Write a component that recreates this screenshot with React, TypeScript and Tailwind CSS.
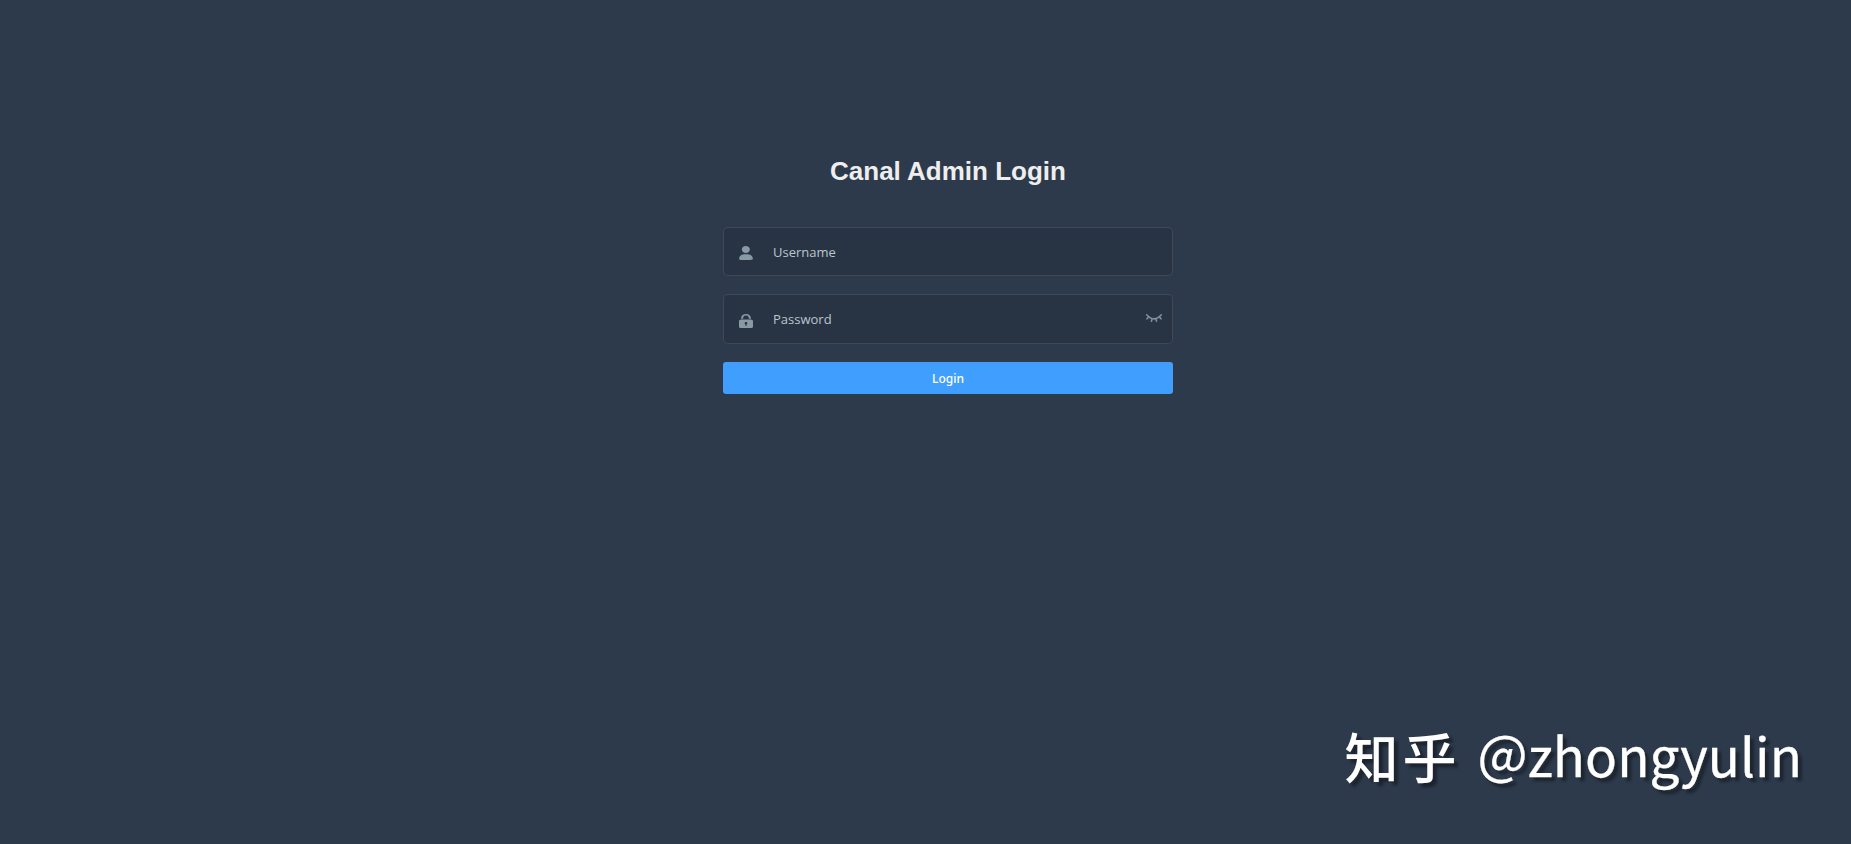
import React from 'react';

function UserIcon() {
  return (
    <svg viewBox="0 0 130 130" className="h-3.5 w-3.5 fill-current" aria-hidden="true">
      <path d="M63.444 64.996c20.633 0 37.359-14.308 37.359-31.953 0-17.649-16.726-31.952-37.359-31.952-20.631 0-37.36 14.303-37.36 31.952 0 17.645 16.729 31.953 37.36 31.953zM80.57 75.65H49.434c-26.652 0-48.26 18.477-48.26 41.27v2.664c0 9.316 21.608 9.325 48.26 9.325H80.57c26.649 0 48.256-.344 48.256-9.325v-2.663c0-22.794-21.605-41.271-48.256-41.271z" />
    </svg>
  );
}

function LockIcon() {
  return (
    <svg viewBox="0 0 128 128" className="h-3.5 w-3.5 fill-current" aria-hidden="true">
      <path d="M108.8 44.322H89.6v-5.36c0-9.04-3.308-24.163-25.6-24.163-23.145 0-25.6 16.881-25.6 24.162v5.361H19.2v-5.36C19.2 15.281 36.798 0 64 0c27.202 0 44.8 15.281 44.8 38.961v5.361zm-32 39.356c0-5.44-5.763-9.832-12.8-9.832-7.037 0-12.8 4.392-12.8 9.832 0 3.682 2.567 6.808 6.407 8.477v11.205c0 2.718 2.875 4.962 6.4 4.962 3.524 0 6.4-2.244 6.4-4.962V92.155c3.833-1.669 6.393-4.795 6.393-8.477zM128 64v49.201c0 8.158-8.645 14.799-19.2 14.799H19.2C8.651 128 0 121.359 0 113.201V64c0-8.153 8.645-14.799 19.2-14.799h89.6c10.555 0 19.2 6.646 19.2 14.799z" />
    </svg>
  );
}

function ClosedEyeIcon() {
  return (
    <svg viewBox="0 0 128 64" className="h-2 w-4 fill-current stroke-current stroke-[3]" aria-hidden="true">
      <path d="M127.072 7.994c1.37-2.208.914-5.152-.914-6.87-2.056-1.717-4.797-1.226-6.396.982-.229.245-25.586 32.382-55.74 32.382-29.24 0-55.74-32.382-55.968-32.627-1.6-1.963-4.57-2.208-6.397-.49C-.17 3.086-.399 6.275 1.2 8.238c.457.736 5.94 7.36 14.62 14.72L4.17 35.96c-1.828 1.963-1.6 5.152.228 6.87.457.98 1.6 1.471 2.742 1.471s2.284-.49 3.198-1.472l12.564-13.983c5.94 4.416 13.021 8.587 20.788 11.53l-4.797 17.418c-.685 2.699.686 5.397 3.198 6.133h1.37c2.057 0 3.884-1.472 4.341-3.68L52.6 42.83c3.655.736 7.538 1.227 11.422 1.227 3.883 0 7.767-.49 11.422-1.227l4.797 17.173c.457 2.208 2.513 3.68 4.34 3.68.457 0 .914 0 1.143-.246 2.513-.736 3.883-3.434 3.198-6.133l-4.797-17.172c7.767-2.944 14.848-7.114 20.788-11.53l12.336 13.738c.913.981 2.056 1.472 3.198 1.472s2.284-.49 3.198-1.472c1.828-1.963 1.828-4.906.228-6.87l-11.65-13.001c9.366-7.36 14.849-14.474 14.849-14.474z" />
    </svg>
  );
}

const inputClass =
  "mt-0.5 ml-5 min-w-0 flex-1 bg-transparent font-['Open_Sans','Noto_Sans',sans-serif] text-[13px] text-white outline-none placeholder:text-[#bcc5ce] placeholder:opacity-100";

export default function App() {
  return (
    <main className="relative flex h-[844px] w-full justify-center overflow-hidden bg-[#2d3a4b] pl-[45px]">
      <form className="flex w-[450px] flex-col pt-[156px]" onSubmit={(e) => e.preventDefault()}>
        <h1 className="mb-10 text-center font-['Liberation_Sans',Arial,sans-serif] text-[26px] leading-[31px] font-bold text-[#eeeeee]">
          Canal Admin Login
        </h1>
        <div className="mb-[18px] flex h-[49px] items-center rounded-[5px] border border-white/10 bg-black/10 pr-[9px] pl-[15px] text-[#889aa4]">
          <span className="mt-0.5"><UserIcon /></span>
          <input className={inputClass} type="text" placeholder="Username" aria-label="Username" />
        </div>
        <div className="mb-[18px] flex h-[50px] items-center rounded-[5px] border border-white/10 bg-black/10 pr-[10px] pl-[15px] text-[#889aa4]">
          <span className="mt-[3px]"><LockIcon /></span>
          <input className={inputClass} type="password" placeholder="Password" aria-label="Password" />
          <button type="button" aria-label="Show password" className="mb-0.5">
            <ClosedEyeIcon />
          </button>
        </div>
        <button
          type="submit"
          className="h-8 rounded-[3px] bg-[#409eff] pt-0.5 font-['Noto_Sans','Open_Sans',sans-serif] text-[12px] font-medium text-white"
        >
          Login
        </button>
      </form>
      <div className="absolute right-[49px] bottom-[46px] flex items-start gap-[17px] font-['Noto_Sans_CJK_SC',sans-serif] leading-[84px] whitespace-nowrap text-white [text-shadow:4px_4px_3px_rgba(0,0,0,0.4)]">
        <span className="text-[54px] font-medium tracking-[4px]">知乎</span>
        <span className="-mt-[2px] text-[53px] [-webkit-text-stroke:0.3px_white]">
          <span className="align-[3px] leading-none">@</span>zhongyulin
        </span>
      </div>
    </main>
  );
}
